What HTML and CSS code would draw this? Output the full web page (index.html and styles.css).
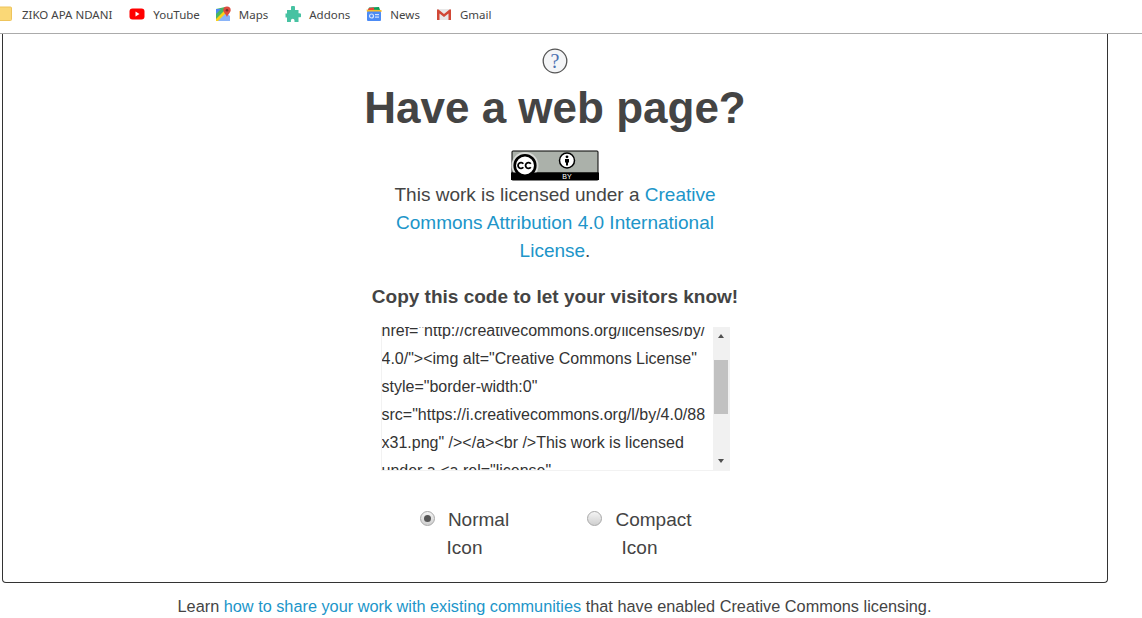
FILE: index.html
```html
<!DOCTYPE html>
<html lang="en">
<head>
<meta charset="utf-8">
<title>Have a web page?</title>
<link rel="stylesheet" href="styles.css">
</head>
<body>
<nav class="bookmarks">
  <span class="bm bm-folder"><svg width="12" height="16" viewBox="0 0 12 16"><path d="M-3 1H10.5Q11.5 1 11.500 2V13.500Q11.500 14.500 10.500 14.500H-3Z" fill="#fad877" stroke="#eec45c"/></svg>ZIKO APA NDANI</span>
  <span class="bm"><svg width="16" height="16" viewBox="0 0 16 16"><rect x="0.500" y="2.500" width="15" height="11" rx="3" fill="#f00"/><path d="M6.500 5.500V10.500L10.500 8Z" fill="#fff"/></svg>YouTube</span>
  <span class="bm"><svg width="16" height="16" viewBox="0 0 16 16"><path d="M1 3L10 1V15H1Z" fill="#48b564"/><path d="M1 15L10 6L15 10V15Z" fill="#8ab4f8"/><path d="M1 13L9 5L11 7L3 15H1Z" fill="#fcd116"/><path d="M1 3H6L1 8Z" fill="#4a89f3"/><path d="M12 0.500a3.700 3.700 0 0 1 3.700 3.700C15.700 6.500 13 8 12 11C11 8 8.300 6.500 8.300 4.200A3.700 3.700 0 0 1 12 0.500Z" fill="#dd4b3e"/><circle cx="12" cy="4.200" r="1.300" fill="#802d27"/></svg>Maps</span>
  <span class="bm bm-addons"><svg width="16" height="16" viewBox="0 0 16 16"><path d="M6 1.500a2 2 0 0 1 4 0V4h3.500v3.200h1a2 2 0 0 1 0 4h-1V16H9.500v-1.500a1.800 1.800 0 0 0-3.600 0V16H2v-4.500H.5V7.500H2V4h4Z" fill="#47c2a2"/></svg>Addons</span>
  <span class="bm bm-news"><svg width="16" height="16" viewBox="0 0 16 16"><path d="M3 1.500L13 1L14 4H2Z" fill="#0c9d58"/><path d="M0.500 3.500L15.500 4V6H1Z" fill="#f9bc2d"/><path d="M3 2L8 1.500V4H2Z" fill="#ea4335"/><rect x="1" y="5.500" width="14" height="9.500" rx="1" fill="#4c8bf5"/><circle cx="5.500" cy="10" r="2" fill="none" stroke="#d6e4fc" stroke-width="1.200"/><rect x="9" y="8" width="4" height="1.200" fill="#d6e4fc"/><rect x="9" y="10.500" width="4" height="1.200" fill="#d6e4fc"/></svg>News</span>
  <span class="bm bm-gmail"><svg width="16" height="16" viewBox="0 0 16 16"><rect x="1" y="3" width="14" height="11" fill="#e8e8e8"/><path d="M1 14V3.500H2.500L8 8L13.500 3.500H15V14H12.500V7.500L8 11L3.500 7.500V14Z" fill="#d14836"/></svg>Gmail</span>
</nav>
<main class="card">
  <svg class="help" width="26" height="26" viewBox="0 0 26 26"><circle cx="13" cy="13" r="11.800" fill="#f4f5f7" stroke="#555" stroke-width="1.300"/><text x="13" y="20" text-anchor="middle" class="help-mark">?</text></svg>
  <h1>Have a web page?</h1>
  <svg class="cc-badge" width="88" height="31" viewBox="0 0 88 31">
    <rect x="0.500" y="0.500" width="87" height="30" rx="1.500" fill="#000"/>
    <rect x="1.500" y="1.500" width="85" height="21" fill="#abb1aa"/>
    <circle cx="14" cy="15.500" r="13.500" fill="#d9dbd8"/>
    <rect x="0" y="22.500" width="88" height="7.500" fill="#000"/>
    <circle cx="14" cy="15.500" r="10.300" fill="#fff" stroke="#000" stroke-width="2.600"/>
    <path d="M12.300 13.800a2.900 2.900 0 1 0 0 3.400M19.800 13.800a2.900 2.900 0 1 0 0 3.400" fill="none" stroke="#000" stroke-width="1.800"/>
    <circle cx="56" cy="10.500" r="7.500" fill="#fff" stroke="#000" stroke-width="1.500"/>
    <circle cx="56" cy="6.800" r="1.400" fill="#000"/>
    <path d="M54 9H58V12.500H57V15.500H55V12.500H54Z" fill="#000"/>
    <text x="56" y="29.300" text-anchor="middle" class="cc-by">BY</text>
  </svg>
  <p class="license">This work is licensed under a <a href="#">Creative Commons Attribution 4.0 International License</a>.</p>
  <p class="copy">Copy this code to let your visitors know!</p>
  <div class="codebox">
    <div class="code">
      <div class="code-text">href="http://creativecommons.org/licenses/by/<br>4.0/"&gt;&lt;img alt="Creative Commons License"<br>style="border-width:0"<br>src="https://i.creativecommons.org/l/by/4.0/88<br>x31.png" /&gt;&lt;/a&gt;&lt;br /&gt;This work is licensed<br>under a &lt;a rel="license"</div>
    </div>
    <div class="scrollbar">
      <span class="arrow arrow-up"></span>
      <span class="thumb"></span>
      <span class="arrow arrow-down"></span>
    </div>
  </div>
  <div class="options">
    <div class="option"><span class="radio radio-on"></span><span class="option-word">Normal</span><br>Icon</div>
    <div class="option"><span class="radio"></span><span class="option-word">Compact</span><br>Icon</div>
  </div>
</main>
<p class="footer">Learn <a href="#">how to share your work with existing communities</a> that have enabled Creative Commons licensing.</p>
</body>
</html>
```
FILE: styles.css
```css
* { box-sizing: border-box; }
html, body { margin: 0; height: 618px; overflow: hidden; background: #fff; }
body { font-family: "Liberation Sans", Arial, sans-serif; color: #444; }
a { color: #2095c9; text-decoration: none; }
.bookmarks {
  height: 34px; border-bottom: 1px solid #ababab; display: flex; align-items: center;
  font-family: "Noto Sans", "Open Sans", sans-serif; font-size: 11.500px; color: #444;
  padding-bottom: 5px; background: #fff;
}
.bm { display: flex; align-items: center; gap: 8px; margin-left: 15px; white-space: nowrap; }
.bm svg { flex: none; }
.bm-folder { margin-left: 0; gap: 10px; margin-right: 2px; }
.bm-addons { margin-left: 17px; }
.bm-news { margin-left: 16px; }
.bm-gmail { margin-left: 16px; }
.card {
  width: 1106px; height: 549px; margin-left: 2px; border: 1px solid #333; border-top: 0;
  border-radius: 0 0 4px 4px; display: flex; flex-direction: column; align-items: center;
  padding-top: 14px;
}
.help { display: block; }
.help-mark { font-family: "Liberation Serif", serif; font-size: 20px; fill: #4a6fb0; }
h1 { margin: 8px 0 0; font-size: 44px; line-height: 52px; font-weight: 700; color: #444; }
.cc-badge { display: block; margin-top: 16px; }
.cc-by { font-family: "Liberation Sans", sans-serif; font-size: 7px; fill: #fff; }
.license { width: 340px; margin: 0; font-size: 19px; line-height: 28px; text-align: center; }
.copy { margin: 18px 0 0; font-size: 19px; line-height: 28px; font-weight: 700; }
.codebox { width: 349px; height: 144px; margin-top: 16px; display: flex; border: 1px solid #f2f2f2; border-width: 0 0 1px 1px; }
.code { flex: 1; overflow: hidden; position: relative; }
.code-text { margin-top: -10px; font-size: 16px; line-height: 28px; color: #333; white-space: nowrap; }
.scrollbar { width: 17px; flex: none; background: #f1f1f1; position: relative; }
.thumb { position: absolute; top: 33px; left: 1px; width: 14px; height: 54px; background: #c1c1c1; }
.arrow { position: absolute; left: 5px; width: 0; height: 0; border-left: 3.500px solid transparent; border-right: 3.500px solid transparent; }
.arrow-up { top: 7px; border-bottom: 4px solid #505050; }
.arrow-down { bottom: 7px; border-top: 4px solid #505050; }
.options { margin-top: 35px; display: flex; gap: 35px; padding-right: 6px; font-size: 19px; line-height: 28px; }
.option { width: 140px; text-align: center; }
.radio { display: inline-block; vertical-align: top; width: 15px; height: 15px; margin-top: 5px; border-radius: 50%; border: 1px solid #a8a8a8; background: linear-gradient(#f4f4f4, #cfcfcf); position: relative; }
.radio-on::after { content: ""; position: absolute; left: 3px; top: 3px; width: 7px; height: 7px; border-radius: 50%; background: #555; }
.option-word { margin-left: 13px; }
.footer { margin: 13px 0 0; width: 1109px; text-align: center; font-size: 16.300px; line-height: 20px; }
```
